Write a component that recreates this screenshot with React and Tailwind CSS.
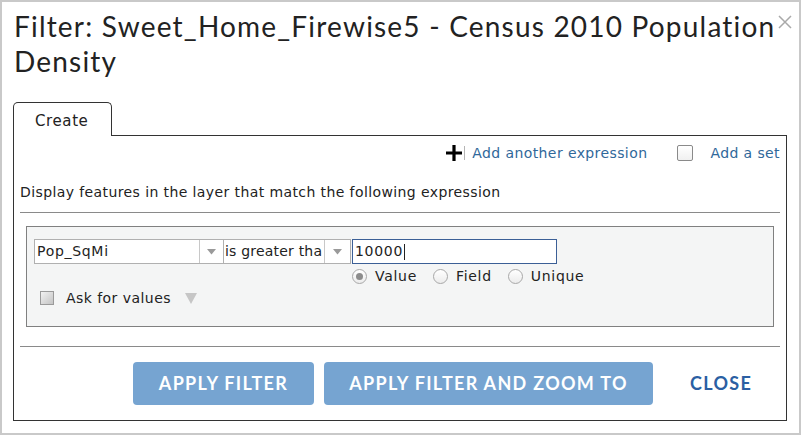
import React from 'react'

const formFont = { fontFamily: '"DejaVu Sans", Verdana, sans-serif' }

function Caret({ className = '' }) {
  return (
    <svg width="9" height="6" viewBox="0 0 9 6" className={className}>
      <path d="M0 0 L9 0 L4.5 5.5 Z" fill="#9a9a9a" />
    </svg>
  )
}

function Radio({ checked, label }) {
  return (
    <label className="flex items-center gap-[8px]">
      <span className="flex h-[15px] w-[15px] items-center justify-center rounded-full border border-[#a8a8a8] bg-gradient-to-b from-white to-[#ececec]">
        {checked && <span className="h-[7px] w-[7px] rounded-full bg-[#8c8c8c]" />}
      </span>
      <span className="text-[14px] tracking-[0.7px] text-[#222]">{label}</span>
    </label>
  )
}

export default function App() {
  return (
    <div className="h-[435px] w-[801px] overflow-hidden border-2 border-[#c9c9c9] bg-white">
      {/* header */}
      <div className="relative pl-[12px] pt-[7px] pr-[14px]">
        <h1
          className="text-[28px] leading-[35px] tracking-[1.2px] text-[#222]"
          style={{ fontFamily: 'Lato, "Open Sans", sans-serif' }}
        >
          Filter: Sweet_Home_Firewise5 - Census 2010 Population Density
        </h1>
        <svg
          width="16"
          height="16"
          viewBox="0 0 16 16"
          className="absolute right-[6px] top-[12px]"
        >
          <path d="M2 2 L14 14 M14 2 L2 14" stroke="#a9a9a9" strokeWidth="1.5" />
        </svg>
      </div>

      {/* tab */}
      <div className="ml-[11px] mt-[23px] w-[774px]" style={formFont}>
        <div className="relative z-10 -mb-px flex h-[34px] w-[99px] items-center rounded-t-[5px] border border-b-0 border-[#333] bg-white pl-[21px] pt-[3px] text-[15px] tracking-[0.6px] text-[#222]">
          Create
        </div>

        {/* panel */}
        <div className="border border-[#333] px-[6px] pb-[15px] pt-[6px]">
          <div className="flex h-[22px] items-center justify-end">
            <div className="flex items-center">
              <svg width="20" height="18" viewBox="0 0 20 18">
                <path d="M8 1 V17 M0 9 H16" stroke="#000" strokeWidth="3.2" />
                <path d="M18.5 2 V16" stroke="#b5b5b5" strokeWidth="1" />
              </svg>
              <span className="ml-[6px] text-[14px] tracking-[0.4px] text-[#30689a]">Add another expression</span>
            </div>
            <div className="ml-[30px] flex items-center">
              <span className="h-[16px] w-[16px] rounded-[2px] border border-[#8a8a8a] bg-gradient-to-b from-white to-[#f0f0f0]" />
              <span className="ml-[17px] text-[14px] tracking-[0.4px] text-[#30689a]">Add a set</span>
            </div>
          </div>

          <p className="mt-[19px] text-[14px] leading-[18px] tracking-[0.4px] text-[#222]">
            Display features in the layer that match the following expression
          </p>

          <div className="mt-[11px] h-px bg-[#8a8a8a]" />

          {/* expression */}
          <div className="mx-[6px] mt-[13px] h-[101px] border border-[#808080] bg-[#f4f5f5] pl-[7px] pt-[12px]">
            <div className="flex h-[25px] text-[14px] tracking-[0.7px] text-[#222]">
              <div className="flex w-[190px] border border-[#b0b0b0] bg-white">
                <span className="flex-1 pl-[2px] leading-[23px]">Pop_SqMi</span>
                <span className="flex w-[24px] items-center justify-center border-l border-[#c8c8c8]">
                  <Caret />
                </span>
              </div>
              <div className="flex w-[127px] border border-l-0 border-[#b0b0b0] bg-white">
                <span className="flex-1 whitespace-nowrap pl-[1px] leading-[23px] tracking-[0.2px]">
                  is greater tha
                </span>
                <span className="flex w-[26px] items-center justify-center border-l border-[#c8c8c8]">
                  <Caret />
                </span>
              </div>
              <div className="ml-px flex w-[205px] items-center border border-[#3b5f96] bg-white pl-[2px]">
                10000<span className="ml-px h-[16px] w-px bg-[#222]" />
              </div>
            </div>

            <div className="ml-[318px] mt-[4px] flex h-[16px] items-center gap-[16px]">
              <Radio checked label="Value" />
              <Radio label="Field" />
              <Radio label="Unique" />
            </div>

            <div className="ml-[6px] mt-[5px] flex h-[18px] items-center">
              <span className="h-[14px] w-[14px] border border-[#9a9a9a] bg-gradient-to-br from-[#f2f2f2] to-[#c4c4c4]" />
              <span className="ml-[12px] text-[14px] tracking-[0.45px] text-[#222]">Ask for values</span>
              <svg width="12" height="11" viewBox="0 0 12 11" className="ml-[14px]">
                <path d="M0 0 L12 0 L6 11 Z" fill="#c6c6c6" />
              </svg>
            </div>
          </div>

          <div className="mt-[19px] h-px bg-[#8a8a8a]" />

          {/* actions */}
          <div
            className="mt-[15px] flex items-center pl-[113px] text-[18px] font-bold tracking-[1.3px]"
            style={{ fontFamily: 'Lato, "Open Sans", sans-serif' }}
          >
            <button className="h-[43px] w-[181px] rounded-[4px] bg-[#76a4d1] text-white">
              APPLY FILTER
            </button>
            <button className="ml-[10px] h-[43px] w-[329px] rounded-[4px] bg-[#76a4d1] text-white">
              APPLY FILTER AND ZOOM TO
            </button>
            <button className="ml-[37px] text-[#2b5fa3]">CLOSE</button>
          </div>
        </div>
      </div>
    </div>
  )
}
